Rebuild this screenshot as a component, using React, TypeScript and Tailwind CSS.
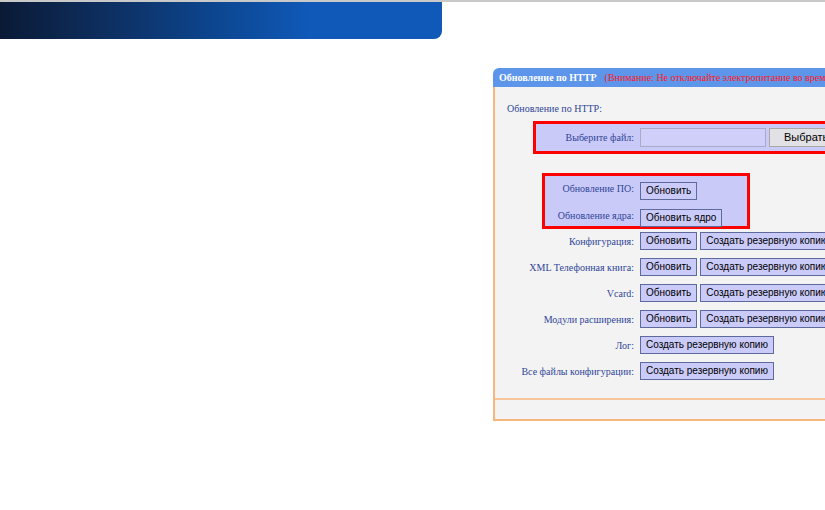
import React from 'react';

const serif = { fontFamily: '"Liberation Serif", "Times New Roman", serif' };

const Btn = ({ children }: { children: React.ReactNode }) => (
  <button
    className="h-[18px] px-[5px] bg-[#cbcbf9] border border-[#5f6a9c] text-[10px] leading-none text-black whitespace-nowrap"
    style={{ fontFamily: '"Liberation Sans", Arial, sans-serif' }}
  >
    {children}
  </button>
);

const Row = ({ label, children }: { label: string; children: React.ReactNode }) => (
  <div className="h-[26px] flex items-center">
    <div className="w-[139px] text-right text-[10px] text-[#2f4597] whitespace-nowrap" style={serif}>
      {label}
    </div>
    <div className="ml-[6px] flex gap-[3px]">{children}</div>
  </div>
);

const App = () => {
  const rows: { label: string; update: boolean }[] = [
    { label: 'Конфигурация:', update: true },
    { label: 'XML Телефонная книга:', update: true },
    { label: 'Vcard:', update: true },
    { label: 'Модули расширения:', update: true },
    { label: 'Лог:', update: false },
    { label: 'Все файлы конфигурации:', update: false },
  ];

  return (
    <div className="w-[825px] h-[510px] overflow-hidden bg-white">
      {/* Top strip */}
      <div className="h-[2px] bg-[#c9c9c9]" />
      <div className="w-[442px] h-[37px] rounded-br-[8px] bg-linear-to-r from-[#0a1a36] via-[#0c4792] via-50% to-[#1059b8] to-70%" />

      <div className="flex mt-[29px]">
        <div className="w-[493px] shrink-0" />

        {/* Panel */}
        <div className="w-[520px] shrink-0">
          <div className="h-[19px] rounded-tl-[6px] bg-[#5d95ea] flex items-center pl-[6px] whitespace-nowrap" style={serif}>
            <span className="font-bold text-white text-[10px]">Обновление по HTTP</span>
            <span className="ml-[8px] text-[#ff1a1a] text-[10px]">(Внимание: Не отключайте электропитание во время обновления)</span>
          </div>

          <div className="bg-[#f3f3f3] border-l-2 border-b-2 border-[#f8b57c]">
            <div className="pt-[16px] pl-[12px] text-[10px] leading-[12px] text-[#2f4597]" style={serif}>
              Обновление по HTTP:
            </div>

            {/* File select box */}
            <div className="mt-[6px] ml-[38px] h-[33px] border-[3px] border-[#ff0000] bg-[#cacaf8] flex items-center">
              <div className="w-[98px] text-right text-[10px] text-[#2f4597] whitespace-nowrap" style={serif}>
                Выберите файл:
              </div>
              <div className="ml-[6px] w-[126px] h-[19px] border border-[#a9a9c9] bg-[#cfcff9]" />
              <button
                className="ml-[3px] h-[19px] px-[14px] bg-[#e1e1e6] border border-[#a8a8a8] text-[11px] leading-none text-black whitespace-nowrap"
                style={{ fontFamily: '"Liberation Sans", Arial, sans-serif' }}
              >
                Выбрать...
              </button>
            </div>

            {/* Firmware / kernel box */}
            <div className="mt-[19px] ml-[47px] w-[208px] border-[3px] border-[#ff0000] bg-[#cacaf8] pt-[3px] pb-[2px] flex flex-col gap-[9px]">
              <div className="flex items-center h-[18px]">
                <div className="w-[89px] text-right text-[10px] text-[#2f4597] whitespace-nowrap" style={serif}>
                  Обновление ПО:
                </div>
                <div className="ml-[6px]">
                  <Btn>Обновить</Btn>
                </div>
              </div>
              <div className="flex items-center h-[18px]">
                <div className="w-[89px] text-right text-[10px] text-[#2f4597] whitespace-nowrap" style={serif}>
                  Обновление ядра:
                </div>
                <div className="ml-[6px]">
                  <Btn>Обновить ядро</Btn>
                </div>
              </div>
            </div>

            <div className="mt-[-1px]">
              {rows.map((r) => (
                <Row key={r.label} label={r.label}>
                  {r.update && <Btn>Обновить</Btn>}
                  <Btn>Создать резервную копию</Btn>
                </Row>
              ))}
            </div>

            <div className="h-[14px]" />
            <div className="h-[2px] bg-[#f8c59a]" />
            <div className="h-[19px]" />
          </div>
        </div>
      </div>
    </div>
  );
};

export default App;
